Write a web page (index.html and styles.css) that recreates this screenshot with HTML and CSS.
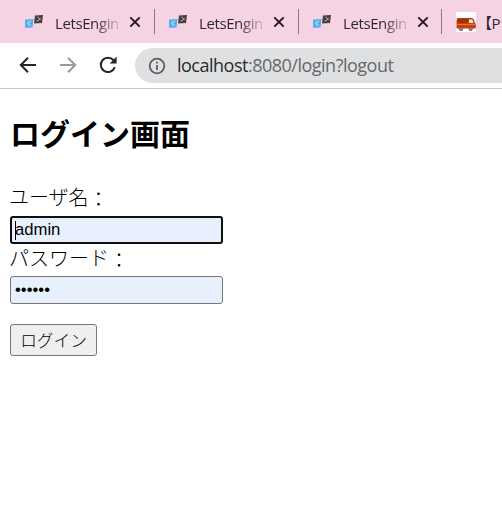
FILE: index.html
```html
<!DOCTYPE html>
<html lang="ja">
<head>
<meta charset="utf-8">
<title>ログイン画面</title>
<link rel="stylesheet" href="styles.css">
</head>
<body>
<svg class="defs" width="0" height="0" aria-hidden="true">
  <symbol id="engine" viewBox="0 0 20 16">
    <path d="M1 5.5L9.5 5L8.5 13.5L1 14Z" fill="#55b1ea"/>
    <path d="M6.8 7L3.5 9.4L6.3 11.6" fill="none" stroke="#d5effc" stroke-width="1"/>
    <path d="M11 1.5L19 1L18 9L10 9.5Z" fill="#453e43"/>
    <path d="M13.3 3.2L16.6 5L12.7 7.2" fill="none" stroke="#d6c7d0" stroke-width=".8"/>
  </symbol>
  <symbol id="close" viewBox="0 0 12 12">
    <path d="M1.3 1.3L10.7 10.7M10.7 1.3L1.3 10.7" fill="none" stroke="#20191e" stroke-width="1.9"/>
  </symbol>
</svg>
<div class="tabs">
  <div class="tab"><svg class="logo"><use href="#engine"/></svg><span class="name">LetsEngin</span><svg class="close"><use href="#close"/></svg></div>
  <div class="tab"><svg class="logo"><use href="#engine"/></svg><span class="name">LetsEngin</span><svg class="close"><use href="#close"/></svg></div>
  <div class="tab"><svg class="logo"><use href="#engine"/></svg><span class="name">LetsEngin</span><svg class="close"><use href="#close"/></svg></div>
  <div class="tab last">
    <svg class="van" viewBox="0 0 20 20">
      <path d="M0 0H20V20H0Z" fill="#fff"/>
      <path d="M.5 8Q.7 6 2.5 6H15.5Q18 6 18.6 10L19.8 12V16.5H.5Z" fill="#c83d0e"/>
      <path d="M2 6.8H12V11H1.2Z" fill="#a92d08"/>
      <path d="M13 7.5H16.3L17.5 11H13Z" fill="#f7e5dc"/>
      <path d="M1 12.5H19.5" stroke="#e57834"/>
      <circle cx="5" cy="17" r="2" fill="#765348"/><circle cx="14.7" cy="17" r="2" fill="#765348"/>
      <circle cx="5" cy="17" r=".8" fill="#d4bcae"/><circle cx="14.7" cy="17" r=".8" fill="#d4bcae"/>
    </svg>
    <span class="name cut">【P</span>
  </div>
</div>
<div class="toolbar">
  <svg class="nav back" viewBox="0 0 18 18"><path d="M17 9H2M9 1.8L1.8 9L9 16.2"/></svg>
  <svg class="nav forward" viewBox="0 0 18 18"><path d="M1 9H16M9 1.8L16.2 9L9 16.2"/></svg>
  <svg class="nav reload" viewBox="0 0 18 18"><path d="M15.8 11.2A7.2 7.2 0 1 1 14.5 4.2L16 6"/><path class="head" d="M17.6 .6V7.6H10.6Z"/></svg>
  <div class="address">
    <svg class="info" viewBox="0 0 18 18"><circle cx="9" cy="9" r="7.3"/><path d="M9 8V13M9 4.8V6.6"/></svg>
    <span class="url"><b>localhost</b>:8080/login?logout</span>
  </div>
</div>
<main>
  <h1>ログイン画面</h1>
  <form>
    <label for="user">ユーザ名<span class="colon">：</span></label>
    <div class="field focused" id="user"><i class="caret"></i>admin</div>
    <label for="pass">パスワード<span class="colon">：</span></label>
    <div class="field" id="pass"><span class="dots">••••••</span></div>
    <button type="button">ログイン</button>
  </form>
</main>
</body>
</html>
```
FILE: styles.css
```css
* { box-sizing: border-box; }
body {
  margin: 0;
  height: 521px;
  overflow: hidden;
  background: #fff;
  color: #000;
  font-family: "Noto Sans CJK JP", sans-serif;
}
svg { display: block; flex: none; }
.defs { position: absolute; }

.tabs {
  display: flex;
  height: 43px;
  padding-left: 11px;
  background: #f5d3e3;
  overflow: hidden;
}
.tab {
  display: flex;
  align-items: center;
  flex: none;
  width: 144px;
  height: 43px;
  padding-left: 14px;
  background: linear-gradient(#8f7884, #8f7884) right 0 top 9px / 1px 25px no-repeat;
}
.tab:nth-child(3) { width: 143px; }
.tab.last { background: none; padding-left: 14px; width: 60px; }
.logo { width: 20px; height: 16px; margin-top: 1px; margin-left: -1px; }
.name {
  width: 65px;
  margin-left: 11px;
  overflow: hidden;
  white-space: nowrap;
  font: 15px/22px "Open Sans", "Noto Sans CJK JP", sans-serif;
  letter-spacing: -0.4px;
  color: #30272d;
  margin-top: 2px;
  -webkit-mask-image: linear-gradient(90deg, #000 62%, transparent 105%);
  mask-image: linear-gradient(90deg, #000 62%, transparent 105%);
}
.cut { flex: none; width: 26px; margin-left: 1px; -webkit-mask-image: none; mask-image: none; }
.close { width: 12px; height: 12px; margin-left: 9px; }
.van { width: 20px; height: 20px; }

.toolbar {
  display: flex;
  align-items: center;
  height: 46px;
  padding-left: 19px;
  border-bottom: 1px solid #c9c9c9;
}
.nav { width: 18px; height: 18px; margin-top: -1px; fill: none; stroke: #242528; stroke-width: 2; }
.forward { margin-left: 22px; stroke: #9b9b9d; }
.reload { margin-left: 22px; }
.reload .head { fill: #242528; stroke: none; }
.address {
  display: flex;
  align-items: center;
  flex: 1;
  height: 35px;
  margin-left: 18px;
  padding-left: 13px;
  border-radius: 18px 0 0 18px;
  background: #dfe0e2;
}
.info { width: 18px; height: 18px; fill: none; stroke: #5c5e61; stroke-width: 1.8; }
.url {
  margin: -1px 0 0 11px;
  font: 18px/26px "Open Sans", sans-serif;
  letter-spacing: -0.5px;
  white-space: nowrap;
  color: #66686b;
}
.url b { font-weight: 400; color: #292a2d; }

main { padding: 23px 10px 0; }
h1 { margin: 0; font-size: 30px; line-height: 40px; font-weight: 700; }
form { display: flex; flex-direction: column; align-items: flex-start; margin-top: 30px; }
label { height: 34px; margin-left: -1px; font-size: 20px; line-height: 30px; font-weight: 300; }
#user + label { height: 32px; line-height: 28px; }
.colon { position: relative; top: 2px; }
.field {
  display: flex;
  align-items: center;
  width: 213px;
  height: 28px;
  padding-left: 4px;
  border: 1px solid #767676;
  border-radius: 3px;
  background: #e8f0fe;
  font: 16.67px/20px "Liberation Sans", sans-serif;
}
.focused { border: 2px solid #101010; padding-left: 3px; }
.caret { width: 1px; height: 19px; margin-right: -1px; background: #000; }
.dots { margin-top: -1px; }
button {
  width: 87px;
  height: 32px;
  margin-top: 20px;
  padding: 0;
  border: 1px solid #767676;
  border-radius: 3px;
  background: #efefef;
  color: #000;
  font: 300 16.67px/28px "Noto Sans CJK JP", sans-serif;
}
```
